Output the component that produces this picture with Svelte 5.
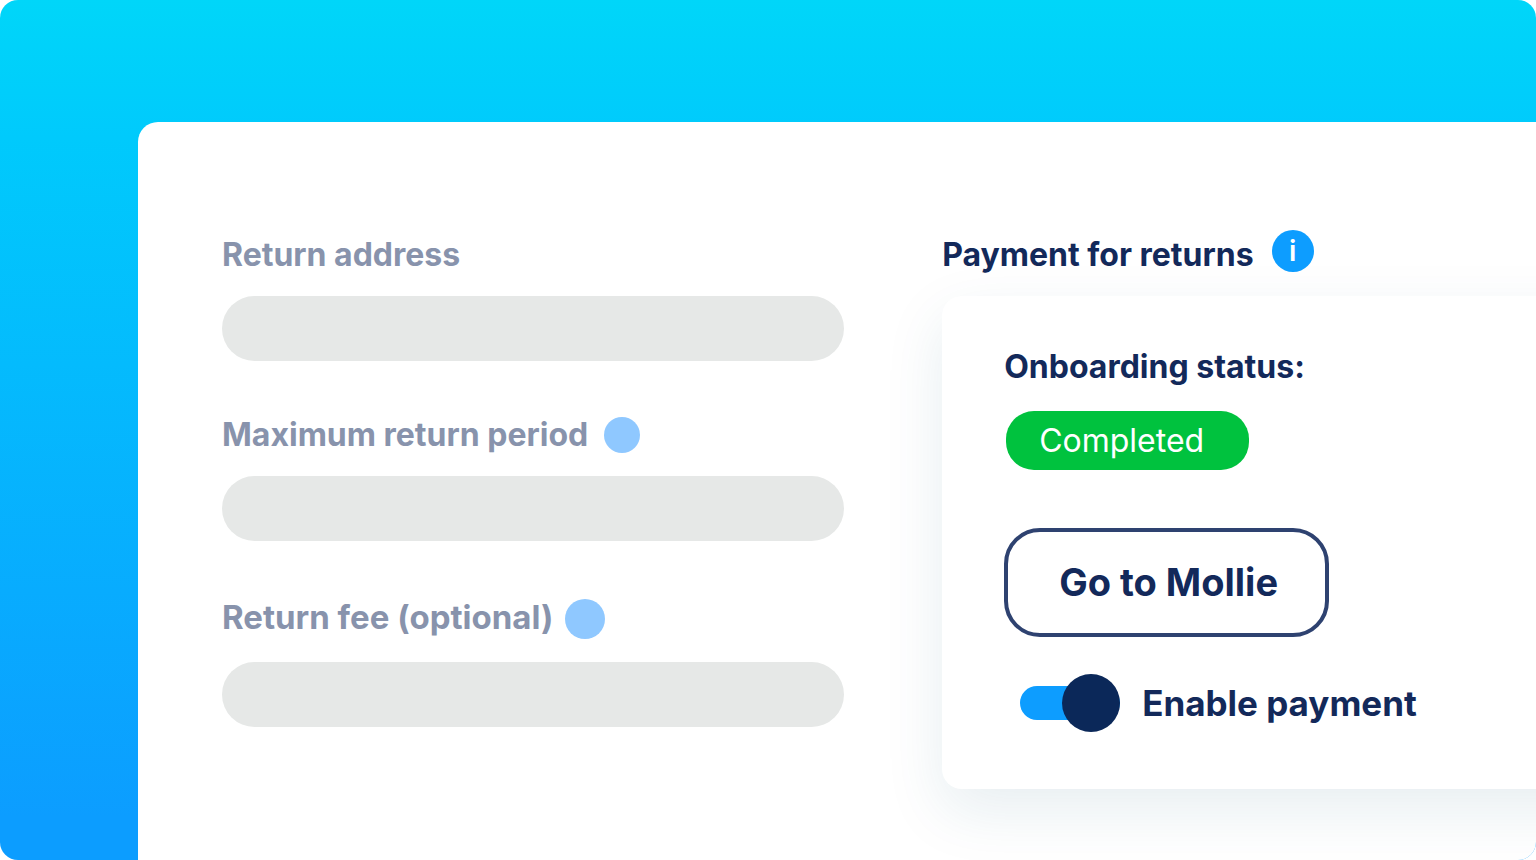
<script lang="ts">
  type Field = { id: string; label: string; hint?: 'small' | 'large' };

  const fields: Field[] = [
    { id: 'address', label: 'Return address' },
    { id: 'period', label: 'Maximum return period', hint: 'small' },
    { id: 'fee', label: 'Return fee (optional)', hint: 'large' },
  ];

  let paymentEnabled = $state(true);
</script>

<main class="backdrop">
  <div class="panel">
    <form class="fields">
      {#each fields as field}
        <div class="field" class:spaced={field.hint === 'large'}>
          <div class="field-head">
            <label for={field.id}>{field.label}</label>
            {#if field.hint}
              <span class="dot {field.hint}"></span>
            {/if}
          </div>
          <input class="field-input" type="text" id={field.id} name={field.id} />
        </div>
      {/each}
    </form>

    <section class="payment">
      <div class="payment-head">
        <h2>Payment for returns</h2>
        <button type="button" class="info">i</button>
      </div>

      <div class="card">
        <h3>Onboarding status:</h3>
        <span class="status">Completed</span>
        <button type="button" class="mollie-btn">Go to Mollie</button>
        <div class="toggle-row">
          <input class="toggle" type="checkbox" id="enable-payment" bind:checked={paymentEnabled} />
          <label for="enable-payment">Enable payment</label>
        </div>
      </div>
    </section>
  </div>
</main>

<style>
  :global(body) {
    margin: 0;
    background: #fff;
  }
  .backdrop {
    box-sizing: border-box;
    min-height: 100vh;
    display: flex;
    padding: 122px 0 0 138px;
    border-radius: 18px;
    overflow: hidden;
    background: linear-gradient(#00d6f9, #00cafc 16%, #0c9dff 95%);
    font-family: Inter, 'Liberation Sans', sans-serif;
    color: #13295a;
  }
  .panel {
    flex: 1;
    box-sizing: border-box;
    display: grid;
    grid-template-columns: minmax(0, 22fr) minmax(0, 21fr);
    column-gap: 98px;
    align-items: start;
    padding: 108px 0 0 84px;
    border-top-left-radius: 20px;
    background: #fff;
  }

  /* Left column */
  .fields {
    display: flex;
    flex-direction: column;
    gap: 54px;
    padding-top: 5px;
  }
  .field {
    display: flex;
    flex-direction: column;
    gap: 21px;
  }
  .field.spaced {
    gap: 23px;
    padding-top: 2px;
  }
  .field-head {
    display: flex;
    align-items: center;
    gap: 16px;
    min-height: 40px;
    font-size: 32px;
    font-weight: 700;
    line-height: 40px;
    color: #8893ac;
  }
  .spaced .field-head {
    align-items: flex-start;
    gap: 12px;
    height: 42px;
    font-size: 33px;
  }
  .dot {
    border-radius: 50%;
    background: #8fc8ff;
  }
  .dot.small {
    width: 36px;
    height: 36px;
  }
  .dot.large {
    width: 40px;
    height: 40px;
    align-self: flex-end;
  }
  .field-input {
    box-sizing: border-box;
    width: 100%;
    height: 65px;
    padding: 0 32px;
    border: none;
    border-radius: 33px;
    background: #e6e8e7;
    font: inherit;
    font-size: 24px;
  }

  /* Right column */
  .payment {
    display: flex;
    flex-direction: column;
    gap: 21px;
  }
  .payment-head {
    display: flex;
    align-items: flex-end;
    gap: 18px;
    height: 45px;
    position: relative;
    z-index: 1;
  }
  h2,
  h3 {
    margin: 0;
    font-size: 32px;
    font-weight: 700;
    line-height: 40px;
  }
  .info {
    align-self: flex-start;
    width: 42px;
    height: 42px;
    padding: 0;
    border: none;
    border-radius: 50%;
    background: #0d9dff;
    color: #fff;
    font: 600 28px/42px Inter, sans-serif;
    cursor: pointer;
  }
  /* The card runs past the right edge of the window */
  .card {
    display: flex;
    flex-direction: column;
    align-items: flex-start;
    margin-right: -80px;
    padding: 51px 104px 57px 62px;
    border-radius: 20px;
    background: #fff;
    box-shadow: 0 22px 60px rgba(20, 90, 120, 0.1);
  }
  .status {
    margin: 24px 0 58px 2px;
    padding: 0 45px 0 33px;
    border-radius: 28px;
    background: #00c23e;
    color: #fff;
    font-size: 32px;
    font-weight: 400;
    line-height: 59px;
  }
  .mollie-btn {
    padding: 0 47px 0 51px;
    border: 4px solid #2e4270;
    border-radius: 36px;
    background: #fff;
    color: #13295a;
    font: 700 38px/101px Inter, sans-serif;
    cursor: pointer;
  }
  .toggle-row {
    display: flex;
    align-items: center;
    gap: 22px;
    margin-top: 37px;
    padding-left: 16px;
    font-size: 35px;
    font-weight: 700;
    line-height: 58px;
  }
  .toggle {
    appearance: none;
    display: grid;
    align-items: center;
    width: 100px;
    height: 58px;
    margin: 0;
    cursor: pointer;
  }
  .toggle::before,
  .toggle::after {
    content: '';
    grid-area: 1 / 1;
  }
  .toggle::before {
    height: 34px;
    border-radius: 17px;
    background: #c5ccd6;
  }
  .toggle::after {
    width: 58px;
    height: 58px;
    border-radius: 50%;
    background: #0b2859;
  }
  .toggle:checked::before {
    background: #0d9dff;
  }
  .toggle:checked::after {
    justify-self: end;
  }
</style>
